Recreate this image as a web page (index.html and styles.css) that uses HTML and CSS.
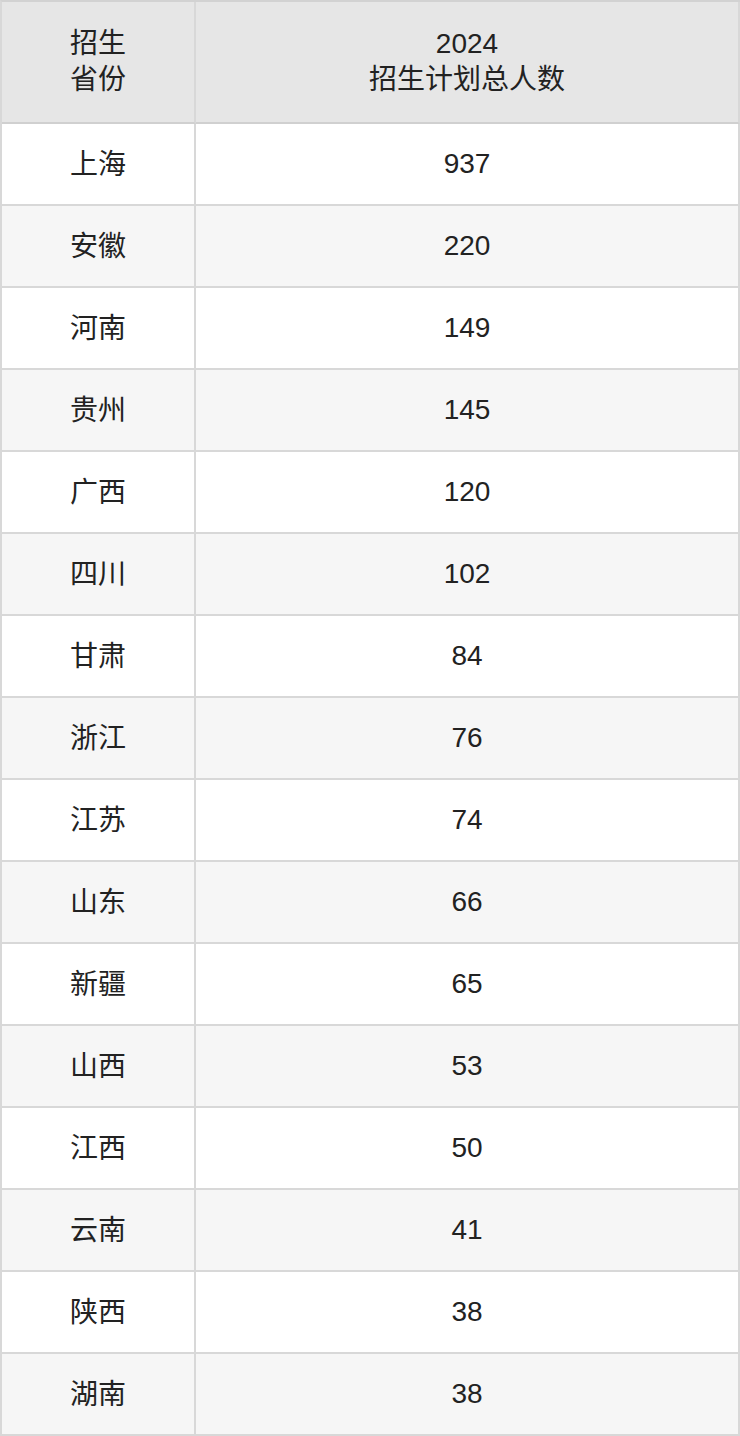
FILE: index.html
```html
<!DOCTYPE html>
<html lang="zh-CN">
<head>
<meta charset="utf-8">
<title>招生计划</title>
<link rel="stylesheet" href="styles.css">
</head>
<body>
<table class="plan">
  <thead>
    <tr><th class="c1">招生<br>省份</th><th class="c2">2024<br>招生计划总人数</th></tr>
  </thead>
  <tbody>
    <tr><td>上海</td><td>937</td></tr>
    <tr><td>安徽</td><td>220</td></tr>
    <tr><td>河南</td><td>149</td></tr>
    <tr><td>贵州</td><td>145</td></tr>
    <tr><td>广西</td><td>120</td></tr>
    <tr><td>四川</td><td>102</td></tr>
    <tr><td>甘肃</td><td>84</td></tr>
    <tr><td>浙江</td><td>76</td></tr>
    <tr><td>江苏</td><td>74</td></tr>
    <tr><td>山东</td><td>66</td></tr>
    <tr><td>新疆</td><td>65</td></tr>
    <tr><td>山西</td><td>53</td></tr>
    <tr><td>江西</td><td>50</td></tr>
    <tr><td>云南</td><td>41</td></tr>
    <tr><td>陕西</td><td>38</td></tr>
    <tr><td>湖南</td><td>38</td></tr>
  </tbody>
</table>
</body>
</html>
```
FILE: styles.css
```css
html, body {
  margin: 0;
  padding: 0;
  background: #ffffff;
}
body {
  font-family: "Liberation Sans", "Noto Sans CJK SC", sans-serif;
  color: #222222;
}
.plan {
  border-collapse: separate;
  border-spacing: 0;
  width: 740px;
  table-layout: fixed;
  border-top: 2px solid #d2d2d2;
  border-left: 2px solid #d8d8d8;
}
.plan th,
.plan td {
  padding: 0;
  text-align: center;
  vertical-align: middle;
  font-size: 28px;
  font-weight: normal;
  border-right: 2px solid #d8d8d8;
  border-bottom: 2px solid #d8d8d8;
}
.plan th {
  height: 120px;
  line-height: 36px;
  background: #e6e6e6;
  border-bottom-color: #d0d0d0;
}
.plan td {
  height: 80px;
  line-height: 36px;
}
.plan tbody td:first-child {
  height: 78px;
  padding-top: 2px;
}
.plan .c1 {
  width: 192px;
}
.plan tbody tr:nth-child(even) td {
  background: #f6f6f6;
}
```
